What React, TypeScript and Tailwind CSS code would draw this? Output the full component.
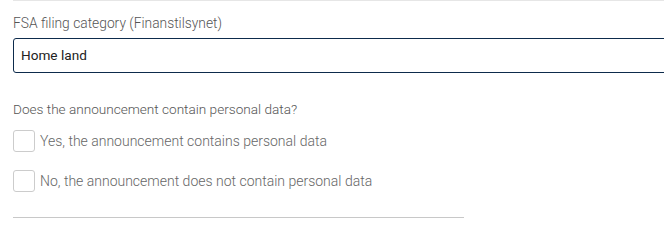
import React from "react";

export default function App() {
  return (
    <div className="w-[664px] h-[233px] overflow-hidden bg-white font-light" style={{ fontFamily: "Roboto, 'Liberation Sans', sans-serif" }}>
      <div className="pl-[13px]">
        <div className="border-t border-[#e6e6e6]" />
        <div className="mt-[13px] text-[13.8px] leading-[18px] text-[#555555]">FSA filing category (Finanstilsynet)</div>
        <div className="mt-[6px] h-[35px] w-[700px] border border-[#0d2b4c] rounded-[3px] pl-[7px] flex items-center text-[13.6px] font-normal text-[#222222]">
          Home land
        </div>
        <div className="mt-[27px] text-[13.6px] leading-[18px] text-[#555555]">Does the announcement contain personal data?</div>
        <div className="mt-[12px] flex flex-col gap-[18px]">
          <label className="flex items-center gap-[5px] h-[22px]">
            <span className="w-[22px] h-[22px] border border-[#cccccc] rounded-[3px] bg-white" />
            <span className="text-[14px] text-[#666666]">Yes, the announcement contains personal data</span>
          </label>
          <label className="flex items-center gap-[5px] h-[22px]">
            <span className="w-[22px] h-[22px] border border-[#cccccc] rounded-[3px] bg-white" />
            <span className="text-[14px] text-[#666666]">No, the announcement does not contain personal data</span>
          </label>
        </div>
        <div className="mt-[25px] w-[451px] border-t border-[#c8c8c8]" />
      </div>
    </div>
  );
}
